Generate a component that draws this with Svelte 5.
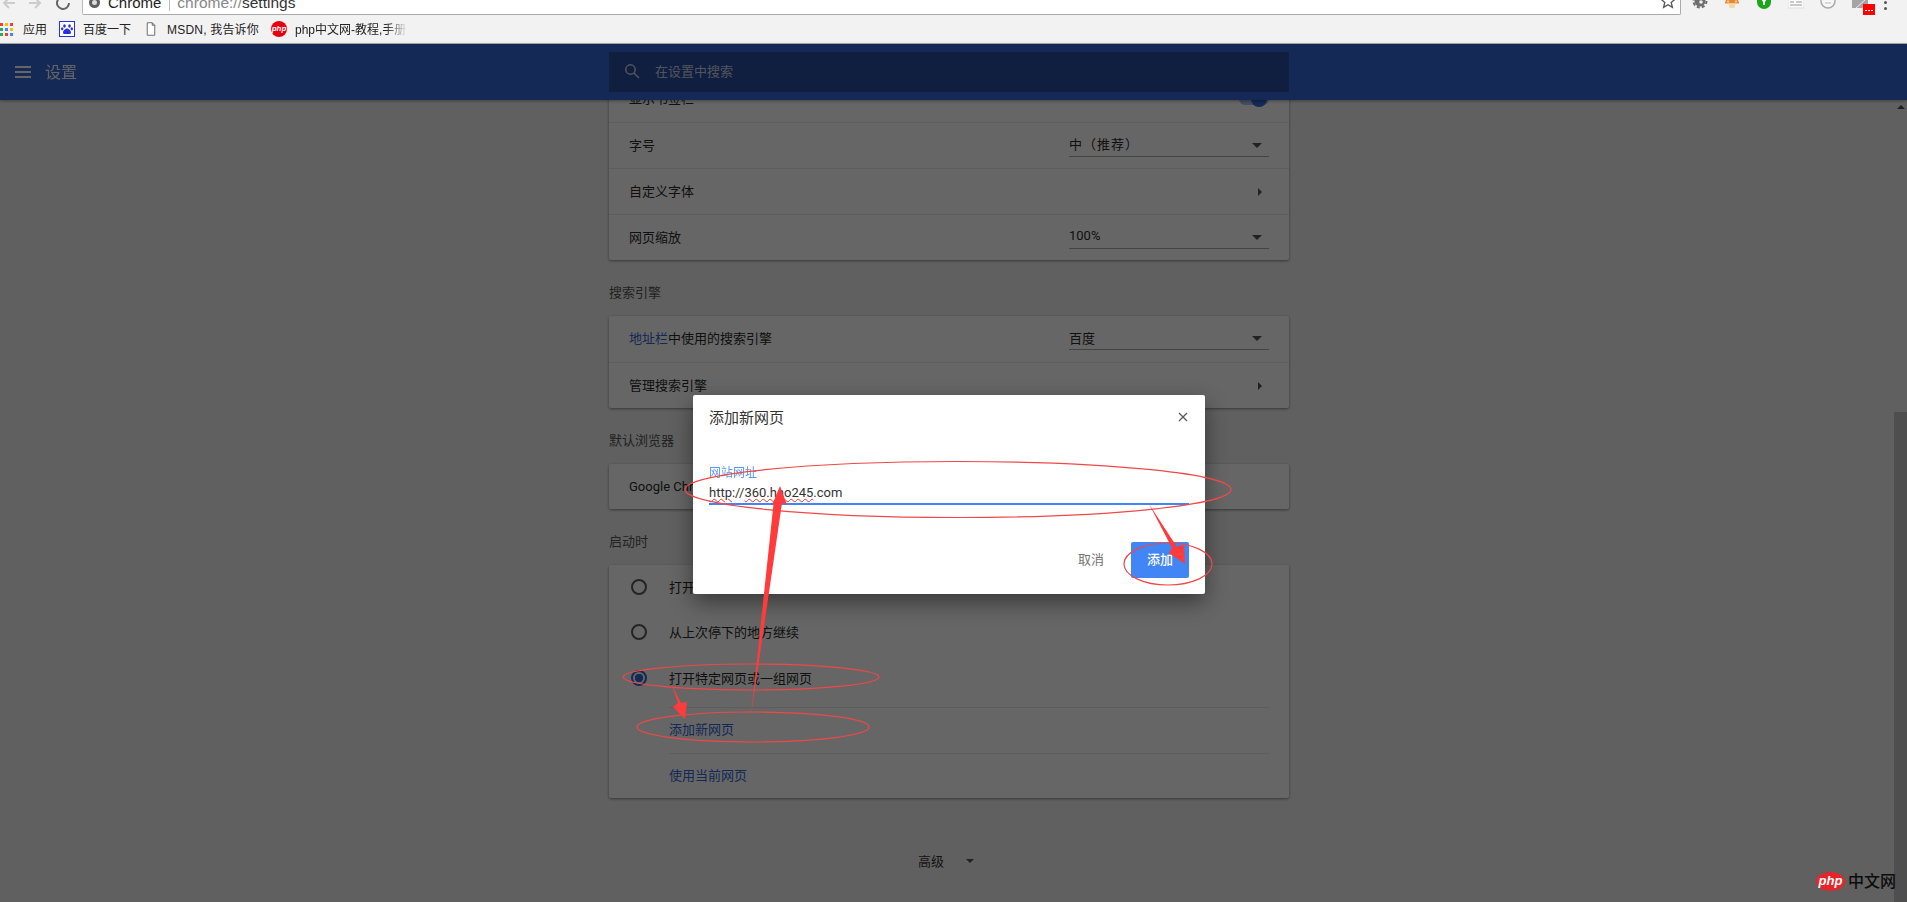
<script>
	const appColors = ['#ea4335', '#fbbc05', '#ea4335', '#34a853', '#4285f4', '#fbbc05', '#34a853', '#ea4335', '#4285f4'];
</script>

<div class="window">
	<div class="toolbar">
		<svg class="nav back" viewBox="0 0 16 16"><path d="M15 3H4M9-2L4 3l5 5" /></svg>
		<svg class="nav forward" viewBox="0 0 16 16"><path d="M1 3h11M7-2l5 5-5 5" /></svg>
		<svg class="nav reload" viewBox="0 0 16 16"><path d="M14 3a6 6 0 1 1-2-4.500" /></svg>
		<div class="omnibox">
			<span class="secure"></span>
			<span class="origin">Chrome</span>
			<span class="pipe"></span>
			<span class="url">chrome://<b>settings</b></span>
			<svg class="star" viewBox="0 0 16 16"><path d="M7-5l2 4.800 5 .4-3.800 3.300 1.200 4.900L7 5.800 2.600 8.400l1.200-4.900L0 .2l5-.4z" /></svg>
		</div>
		<div class="extensions">
			<svg viewBox="0 0 16 16">
				<circle cx="8" cy="1" r="5.500" fill="#6e6e6e" />
				<circle cx="8" cy="1" r="6.500" fill="none" stroke="#6e6e6e" stroke-width="2" stroke-dasharray="3 2.100" />
				<circle cx="9" cy="2" r="1.800" fill="#eee" />
			</svg>
			<svg viewBox="0 0 16 16">
				<path d="M1 3.500a7 7 0 0 1 14 0z" fill="#e8873a" />
				<circle cx="4" cy="1.500" r="1.200" fill="#f6c089" /><circle cx="12" cy="1.500" r="1.200" fill="#f6c089" />
				<path d="M4.500 3.500h7L10.500 8h-5z" fill="#f3d9a8" />
			</svg>
			<svg viewBox="0 0 16 16"><path d="M1-4h14v6a7 7 0 0 1-7 7 7 7 0 0 1-7-7z" fill="#1aa81a" /><path d="M8-2a2 2 0 0 1 1 3.700V5H7V1.700A2 2 0 0 1 8-2z" fill="#fff" /></svg>
			<svg viewBox="0 0 16 16"><path d="M0-4h16v12H0z" fill="#fbfbfb" stroke="#ddd" /><path d="M2 2h4M8 2h6M2 5h12" stroke="#999" /></svg>
			<svg viewBox="0 0 16 16"><circle cx="8" cy="1" r="7" fill="#f6f6f6" stroke="#aaa" stroke-width="1.500" /><path d="M5 3h6" stroke="#bbb" /></svg>
			<div class="badged">
				<svg viewBox="0 0 16 16"><path d="M0-4h16v12H0z" fill="#a5a5a5" /><path d="M3 9L14-1" stroke="#eee" /></svg>
				<svg class="badge" viewBox="0 0 12 11"><rect width="12" height="11" fill="#f00" /><path d="M2 6.500h2M5 6.500h2M8 6.500h2" stroke="#fff" /></svg>
			</div>
		</div>
		<div class="menu-dots"><i></i><i></i></div>
	</div>

	<div class="bookmarks">
		<div class="bookmark apps">
			<span class="grid">
				{#each appColors as color}
					<i style="background: {color}"></i>
				{/each}
			</span>
			<span>应用</span>
		</div>
		<div class="bookmark baidu">
			<svg viewBox="0 0 16 16">
				<rect x=".5" y=".5" width="15" height="15" fill="#fff" stroke="#2932e1" />
				<g fill="#2932e1">
					<ellipse cx="5.500" cy="5" rx="1.300" ry="1.800" /><ellipse cx="10.500" cy="5" rx="1.300" ry="1.800" />
					<ellipse cx="3.200" cy="7.800" rx="1.200" ry="1.500" /><ellipse cx="12.800" cy="7.800" rx="1.200" ry="1.500" />
					<path d="M8 7.500c-2 0-4 2.500-4 4.200 0 1.600 2 1.300 4 1.300s4 .3 4-1.300C12 10 10 7.500 8 7.500z" />
				</g>
			</svg>
			<span>百度一下</span>
		</div>
		<div class="bookmark doc">
			<svg viewBox="0 0 12 16"><path d="M1.500.5h6l3 3v12h-9zM7.500.5v3h3" fill="#fff" stroke="#555" /></svg>
			<span class="msdn">MSDN, 我告诉你</span>
		</div>
		<div class="bookmark php">
			<span class="php-round">php</span>
			<span class="fade">php中文网-教程,手册</span>
		</div>
	</div>

	<header class="header">
		<svg class="burger" viewBox="0 0 16 12"><path d="M0 1h16M0 6h16M0 11h16" /></svg>
		<span class="page-title">设置</span>
		<div class="search">
			<svg viewBox="0 0 16 16"><circle cx="6.500" cy="6.500" r="4.700" /><path d="M10 10l5 5" /></svg>
			<span>在设置中搜索</span>
		</div>
	</header>

	<main class="main">
		<div class="content">
			<section class="card">
				<div class="row">
					<span>显示书签栏</span>
					<span class="toggle"><i></i></span>
				</div>
				<div class="row line">
					<span>字号</span>
					<div class="select"><span class="spaced">中（推荐）</span><i class="caret"></i></div>
				</div>
				<div class="row line">
					<span>自定义字体</span>
					<i class="chevron"></i>
				</div>
				<div class="row line">
					<span>网页缩放</span>
					<div class="select"><span>100%</span><i class="caret"></i></div>
				</div>
			</section>

			<h2>搜索引擎</h2>
			<section class="card">
				<div class="row">
					<span><span class="link">地址栏</span>中使用的搜索引擎</span>
					<div class="select"><span>百度</span><i class="caret"></i></div>
				</div>
				<div class="row line">
					<span>管理搜索引擎</span>
					<i class="chevron"></i>
				</div>
			</section>

			<h2>默认浏览器</h2>
			<section class="card">
				<div class="row default-row"><span>Google Chrome 是您的默认浏览器</span></div>
			</section>

			<h2>启动时</h2>
			<section class="card startup">
				<div class="radio-row"><i class="radio"></i><span>打开新标签页</span></div>
				<div class="radio-row"><i class="radio"></i><span>从上次停下的地方继续</span></div>
				<div class="radio-row"><i class="radio on"></i><span>打开特定网页或一组网页</span></div>
				<div class="sub-rows">
					<div class="sub-row link">添加新网页</div>
					<div class="sub-row link">使用当前网页</div>
				</div>
			</section>

			<div class="advanced">
				<span>高级</span>
				<i class="caret small"></i>
			</div>
		</div>
		<div class="scrollbar">
			<i class="scroll-up"></i>
			<div class="thumb"></div>
		</div>
	</main>

	<div class="scrim"></div>

	<div class="dialog">
		<div class="dialog-head">
			<span>添加新网页</span>
			<svg viewBox="0 0 10 10"><path d="M1 1l8 8M9 1l-8 8" /></svg>
		</div>
		<div class="field">
			<label for="site-url">网站网址</label>
			<div id="site-url" class="field-value"><span class="typo">http</span>://<span class="typo">360.hao245</span>.com</div>
		</div>
		<div class="dialog-actions">
			<button class="cancel">取消</button>
			<button class="add">添加</button>
		</div>
	</div>

	<svg class="marks" viewBox="0 0 1907 902">
		<g fill="none" stroke="#f04848" stroke-width="1.200">
			<ellipse cx="958" cy="489.500" rx="273" ry="28" />
			<ellipse cx="1168" cy="564" rx="44" ry="21" />
			<ellipse cx="751" cy="677" rx="128" ry="13" />
			<ellipse cx="753" cy="727" rx="116" ry="15" />
		</g>
		<g fill="#ff3b3b">
			<path d="M751 716L773.500 504L772 505L780 486L787 505L782 503Z" />
			<path d="M671 683L678 703L673 707L685 719L687 702L681 703Z" />
			<path d="M1149 504L1172 548L1169 553L1185 564L1184 545L1177 547Z" />
		</g>
	</svg>

	<div class="watermark">
		<span class="wm-logo">php</span>
		<span class="wm-text">中文网</span>
	</div>
</div>

<style>
	:global(body) {
		margin: 0;
		background: #f1f1f1;
	}

	.window {
		position: relative;
		display: flex;
		flex-direction: column;
		width: 1907px;
		height: 902px;
		overflow: hidden;
		font-family: Roboto, "Noto Sans CJK SC", sans-serif;
		font-size: 13px;
		color: #2a2a2a;
	}

	/* browser chrome */
	.toolbar {
		display: flex;
		flex: none;
		height: 15px;
		overflow: hidden;
		background: #f2f2f2;
	}

	.nav {
		flex: none;
		width: 16px;
		height: 16px;
		fill: none;
		stroke-width: 2;
	}

	.back {
		margin-left: 0;
		stroke: #ccc;
	}

	.forward {
		margin-left: 12px;
		stroke: #ccc;
	}

	.reload {
		margin-left: 11px;
		stroke: #666;
	}

	.omnibox {
		display: flex;
		flex: none;
		align-items: center;
		box-sizing: border-box;
		width: 1599px;
		height: 15px;
		margin-left: 11px;
		padding-left: 6px;
		background: #fff;
		border: 1px solid #aaa;
		border-top: none;
		border-left-color: #bbb;
		border-radius: 0 0 2px 2px;
		font-family: "Liberation Sans", sans-serif;
		font-size: 15px;
		line-height: 16px;
	}

	.secure {
		box-sizing: border-box;
		width: 11px;
		height: 11px;
		margin-top: -9px;
		border: 3px solid #5f5f5f;
		background: #ddd;
		border-radius: 50%;
	}

	.origin,
	.url {
		margin-top: -9px;
	}

	.origin {
		margin-left: 8px;
		color: #222;
	}

	.pipe {
		width: 1px;
		height: 12px;
		margin: -4px 7px 0 8px;
		background: #bbb;
	}

	.url {
		font-size: 15.500px;
		color: #888;
	}

	.url b {
		font-weight: 400;
		color: #333;
	}

	.star {
		width: 16px;
		height: 16px;
		margin: 0 3px 0 auto;
		fill: #fff;
		stroke: #555;
		stroke-width: 1.300;
	}

	.extensions {
		display: flex;
		flex: none;
		gap: 16px;
		margin-left: 11px;
	}

	.extensions svg {
		display: block;
		width: 16px;
		height: 16px;
		overflow: hidden;
	}

	.badged {
		position: relative;
		width: 16px;
	}

	.extensions .badge {
		position: absolute;
		top: 4px;
		left: 11px;
		width: 12px;
		height: 11px;
	}

	.menu-dots {
		display: flex;
		flex-direction: column;
		gap: 3px;
		margin: 1px 0 0 16px;
	}

	.menu-dots i {
		width: 3px;
		height: 3px;
		background: #555;
		border-radius: 50%;
	}

	.bookmarks {
		display: flex;
		flex: none;
		align-items: center;
		box-sizing: border-box;
		height: 29px;
		background: #f2f2f2;
		border-bottom: 1px solid #aaa;
		font-family: "Liberation Sans", "Noto Sans CJK SC", sans-serif;
		font-size: 12px;
		color: #222;
	}

	.bookmark {
		display: flex;
		align-items: center;
		flex: none;
	}

	.bookmark span:last-child {
		padding-bottom: 2px;
	}

	.msdn {
		letter-spacing: 0.2px;
	}

	.apps {
		gap: 10px;
		width: 59px;
	}

	.grid {
		display: grid;
		grid-template-columns: repeat(3, 3px);
		gap: 2px;
	}

	.grid i {
		width: 3px;
		height: 3px;
	}

	.baidu {
		gap: 8px;
		width: 87px;
	}

	.baidu svg {
		width: 16px;
		height: 16px;
	}

	.doc {
		gap: 11px;
		width: 125px;
	}

	.doc svg {
		width: 10px;
		height: 14px;
	}

	.php {
		gap: 8px;
	}

	.php-round {
		width: 16px;
		height: 16px;
		background: #e60012;
		border-radius: 50%;
		color: #fff;
		font: italic 700 8px/16px "Liberation Sans", sans-serif;
		text-align: center;
	}

	.fade {
		width: 113px;
		overflow: hidden;
		white-space: nowrap;
		-webkit-mask-image: linear-gradient(90deg, #000 80%, transparent);
		mask-image: linear-gradient(90deg, #000 80%, transparent);
	}

	/* settings header */
	.header {
		position: relative;
		z-index: 2;
		display: flex;
		flex: none;
		align-items: center;
		height: 56px;
		background: #3367d6;
		box-shadow: 0 1px 3px rgba(0, 0, 0, 0.35);
		color: #fff;
	}

	.burger {
		width: 16px;
		height: 12px;
		margin-left: 15px;
		fill: none;
		stroke: #fff;
		stroke-width: 2;
	}

	.page-title {
		margin-left: 14px;
		padding-bottom: 3px;
		font-size: 16px;
		opacity: 0.95;
	}

	.search {
		display: flex;
		align-items: center;
		gap: 15px;
		box-sizing: border-box;
		width: 680px;
		height: 40px;
		margin-left: 532px;
		padding-left: 15px;
		background: #2a4d9e;
		color: rgba(255, 255, 255, 0.75);
	}

	.search span {
		padding-bottom: 3px;
	}

	.search svg {
		width: 16px;
		height: 16px;
		margin-top: -2px;
		fill: none;
		stroke: rgba(255, 255, 255, 0.75);
		stroke-width: 1.500;
	}

	/* page under the scrim */
	.main {
		display: flex;
		flex: 1;
		min-height: 0;
		margin-top: -24px;
		background: #f1f1f1;
	}

	.content {
		flex: none;
		box-sizing: border-box;
		width: 1894px;
		padding-left: 609px;
	}

	.card {
		box-sizing: border-box;
		width: 680px;
		background: #fff;
		border-radius: 2px;
		box-shadow: 0 1px 3px rgba(0, 0, 0, 0.45);
	}

	h2 {
		display: flex;
		align-items: center;
		box-sizing: border-box;
		height: 56px;
		margin: 0;
		padding-top: 7px;
		font-size: 13px;
		font-weight: 400;
		color: #555;
	}

	.row {
		display: flex;
		align-items: center;
		justify-content: space-between;
		box-sizing: border-box;
		height: 46px;
		padding: 0 20px;
	}

	.row > span:first-child {
		padding-bottom: 3px;
	}

	.row.line {
		border-top: 1px solid #e8e8e8;
	}

	.default-row {
		height: 45px;
	}

	.link {
		color: #3367d6;
	}

	.select {
		display: flex;
		align-items: center;
		justify-content: space-between;
		box-sizing: border-box;
		width: 200px;
		height: 22px;
		padding-right: 7px;
		border-bottom: 1px solid #aaa;
	}

	.select span {
		padding-bottom: 3px;
	}

	.spaced {
		letter-spacing: 1px;
	}

	.caret {
		width: 0;
		height: 0;
		border-top: 5px solid #555;
		border-left: 5px solid transparent;
		border-right: 5px solid transparent;
	}

	.caret.small {
		border-top-width: 4px;
		border-left-width: 4px;
		border-right-width: 4px;
	}

	.chevron {
		width: 0;
		height: 0;
		margin-right: 7px;
		border-left: 4px solid #555;
		border-top: 4px solid transparent;
		border-bottom: 4px solid transparent;
	}

	.toggle {
		position: relative;
		width: 30px;
		height: 12px;
		background: #a9c0f0;
		border-radius: 6px;
	}

	.toggle i {
		position: absolute;
		top: -2px;
		right: 2px;
		width: 16px;
		height: 16px;
		background: #3367d6;
		border-radius: 50%;
	}

	.startup {
		height: 233px;
	}

	.radio-row {
		display: flex;
		align-items: center;
		gap: 22px;
		height: 45.500px;
		padding-left: 22px;
	}

	.radio-row span {
		padding-bottom: 3px;
	}

	.radio {
		box-sizing: border-box;
		width: 16px;
		height: 16px;
		margin-top: -2px;
		border: 2px solid #5a5a5a;
		border-radius: 50%;
	}

	.radio.on {
		border-color: #3367d6;
		background: radial-gradient(circle, #3367d6 0, #3367d6 4px, transparent 4.500px);
	}

	.sub-rows {
		margin: 5px 20px 0 60px;
	}

	.sub-row {
		display: flex;
		align-items: center;
		box-sizing: border-box;
		height: 46px;
		padding-bottom: 4px;
		border-top: 1px solid #e8e8e8;
	}

	.advanced {
		display: flex;
		align-items: center;
		gap: 22px;
		box-sizing: border-box;
		width: 680px;
		height: 126px;
		padding-left: 309px;
		color: #333;
	}

	.advanced span {
		padding-bottom: 2px;
	}

	.scrollbar {
		position: relative;
		flex: none;
		width: 13px;
		padding-top: 336px;
		background: #f1f1f1;
	}

	.scroll-up {
		position: absolute;
		top: 29px;
		left: 3px;
		width: 0;
		height: 0;
		border-bottom: 4px solid #505050;
		border-left: 4px solid transparent;
		border-right: 4px solid transparent;
	}

	.thumb {
		height: 600px;
		background: #c4c4c4;
	}

	/* dialog and overlays */
	.scrim {
		position: absolute;
		inset: 44px 0 0;
		z-index: 3;
		background: rgba(0, 0, 0, 0.6);
	}

	.dialog {
		position: absolute;
		top: 395px;
		left: 693px;
		z-index: 4;
		display: flex;
		flex-direction: column;
		box-sizing: border-box;
		width: 512px;
		height: 199px;
		padding: 0 16px;
		background: #fff;
		border-radius: 2px;
		box-shadow: 0 8px 22px rgba(0, 0, 0, 0.45);
	}

	.dialog-head {
		display: flex;
		align-items: center;
		justify-content: space-between;
		height: 46px;
		font-size: 15px;
		color: #333;
	}

	.dialog-head span {
		padding-bottom: 3px;
	}

	.dialog-head svg {
		width: 10px;
		height: 10px;
		margin-right: 1px;
		margin-top: -2px;
		fill: none;
		stroke: #5a5a5a;
		stroke-width: 1.300;
	}

	.field {
		display: flex;
		flex-direction: column;
		margin-top: 23px;
	}

	.field label {
		font-size: 12px;
		line-height: 18px;
		color: #4285f4;
		opacity: 0.85;
	}

	.field-value {
		box-sizing: border-box;
		height: 23px;
		padding-top: 2px;
		border-bottom: 2px solid #4285f4;
		font-size: 13px;
		line-height: 18px;
		color: #333;
	}

	.typo {
		text-decoration: underline wavy #e33;
		text-decoration-thickness: 1px;
		text-underline-offset: 1px;
	}

	.dialog-actions {
		display: flex;
		align-items: center;
		justify-content: flex-end;
		gap: 27px;
		margin-top: 37px;
	}

	.dialog-actions button {
		height: 36px;
		padding: 0 0 3px;
		border: none;
		border-radius: 2px;
		font-family: inherit;
		font-size: 13px;
		white-space: nowrap;
	}

	.cancel {
		width: 26px;
		background: none;
		color: #757575;
	}

	.add {
		width: 58px;
		background: #4285f4;
		color: #fff;
		font-weight: 500;
	}

	.marks {
		position: absolute;
		inset: 0;
		z-index: 5;
		width: 1907px;
		height: 902px;
		pointer-events: none;
	}

	.watermark {
		position: absolute;
		top: 872px;
		left: 1816px;
		z-index: 6;
		display: flex;
		align-items: center;
		gap: 3px;
	}

	.wm-logo {
		width: 29px;
		height: 19px;
		background: #e8242a;
		border-radius: 50%;
		color: #fff;
		font: italic 700 13px/18px "Liberation Sans", sans-serif;
		text-align: center;
	}

	.wm-text {
		font-size: 16px;
		font-weight: 500;
		line-height: 19px;
		color: #0c0c0c;
	}
</style>
